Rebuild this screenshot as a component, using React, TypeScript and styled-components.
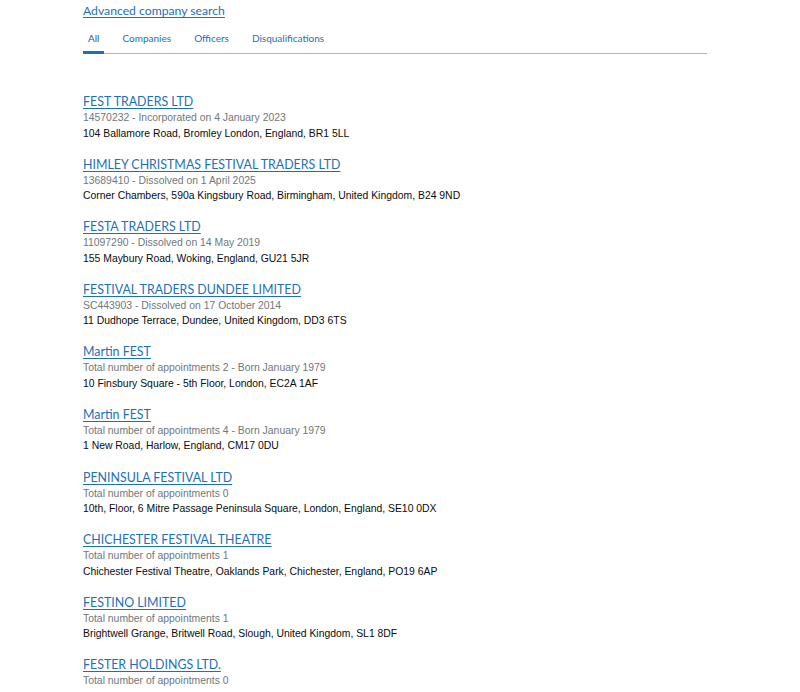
import React from "react";
import styled, { createGlobalStyle } from "styled-components";

const GlobalStyle = createGlobalStyle`
  html, body {
    margin: 0;
    padding: 0;
    background: #ffffff;
  }
  body {
    font-family: "Liberation Sans", Arial, sans-serif;
    color: #0b0c0c;
  }
`;

const Page = styled.div`
  padding: 2px 0 40px 83px;
`;

const Container = styled.div`
  width: 624px;
`;

const AdvancedLink = styled.a`
  display: block;
  width: fit-content;
  font-family: Lato, "Noto Sans", sans-serif;
  font-size: 12.2px;
  line-height: 18px;
  color: #1d70b8;
  text-decoration: underline;
  text-underline-offset: 2px;
`;

const TabList = styled.ul`
  display: flex;
  gap: 13px;
  list-style: none;
  margin: 10px 0 0;
  padding: 0;
  border-bottom: 1px solid #b1b4b6;
`;

const Tab = styled.li<{ $active?: boolean }>`
  margin-bottom: -1px;
  border-bottom: 3px solid ${p => (p.$active ? "#1d70b8" : "transparent")};
`;

const TabLink = styled.a<{ $active?: boolean }>`
  display: block;
  padding: 0 5px 5px;
  font-family: Lato, "Noto Sans", sans-serif;
  font-size: 10px;
  line-height: 16px;
  color: ${p => (p.$active ? "#2a5b8a" : "#1d70b8")};
  text-decoration: none;
`;

const Results = styled.ul`
  list-style: none;
  margin: 40px 0 0;
  padding: 0;
`;

const Result = styled.li`
  margin-bottom: 15.6px;
`;

const Title = styled.a`
  display: block;
  width: fit-content;
  font-family: Lato, "Noto Sans", sans-serif;
  font-size: 12.4px;
  line-height: 16px;
  color: #1d70b8;
  text-decoration: underline;
  text-underline-offset: 2px;
`;

const Meta = styled.p<{ $muted?: boolean }>`
  margin: 0;
  font-size: 10.4px;
  line-height: 15.5px;
  color: ${p => (p.$muted ? "#6f777b" : "#0b0c0c")};
`;

interface SearchResult {
  title: string;
  meta: string;
  address?: string;
}

const results: SearchResult[] = [
  {
    title: "FEST TRADERS LTD",
    meta: "14570232 - Incorporated on 4 January 2023",
    address: "104 Ballamore Road, Bromley London, England, BR1 5LL",
  },
  {
    title: "HIMLEY CHRISTMAS FESTIVAL TRADERS LTD",
    meta: "13689410 - Dissolved on 1 April 2025",
    address: "Corner Chambers, 590a Kingsbury Road, Birmingham, United Kingdom, B24 9ND",
  },
  {
    title: "FESTA TRADERS LTD",
    meta: "11097290 - Dissolved on 14 May 2019",
    address: "155 Maybury Road, Woking, England, GU21 5JR",
  },
  {
    title: "FESTIVAL TRADERS DUNDEE LIMITED",
    meta: "SC443903 - Dissolved on 17 October 2014",
    address: "11 Dudhope Terrace, Dundee, United Kingdom, DD3 6TS",
  },
  {
    title: "Martin FEST",
    meta: "Total number of appointments 2 - Born January 1979",
    address: "10 Finsbury Square - 5th Floor, London, EC2A 1AF",
  },
  {
    title: "Martin FEST",
    meta: "Total number of appointments 4 - Born January 1979",
    address: "1 New Road, Harlow, England, CM17 0DU",
  },
  {
    title: "PENINSULA FESTIVAL LTD",
    meta: "Total number of appointments 0",
    address: "10th, Floor, 6 Mitre Passage Peninsula Square, London, England, SE10 0DX",
  },
  {
    title: "CHICHESTER FESTIVAL THEATRE",
    meta: "Total number of appointments 1",
    address: "Chichester Festival Theatre, Oaklands Park, Chichester, England, PO19 6AP",
  },
  {
    title: "FESTINO LIMITED",
    meta: "Total number of appointments 1",
    address: "Brightwell Grange, Britwell Road, Slough, United Kingdom, SL1 8DF",
  },
  {
    title: "FESTER HOLDINGS LTD.",
    meta: "Total number of appointments 0",
    address: "Unit 4, Festival Park, Ebbw Vale, Wales, NP23 8FP",
  },
  {
    title: "FESTIVAL REPUBLIC LIMITED",
    meta: "Total number of appointments 0",
    address: "Live Nation House, 5 Kemble Street, London, WC2B 4AN",
  },
];

const tabs = ["All", "Companies", "Officers", "Disqualifications"];

export default function App() {
  return (
    <>
      <GlobalStyle />
      <Page>
        <Container>
          <AdvancedLink href="#">Advanced company search</AdvancedLink>
          <TabList>
            {tabs.map((tab, i) => (
              <Tab key={tab} $active={i === 0}>
                <TabLink href="#" $active={i === 0}>
                  {tab}
                </TabLink>
              </Tab>
            ))}
          </TabList>
          <Results>
            {results.map((r, i) => (
              <Result key={i}>
                <Title href="#">{r.title}</Title>
                <Meta $muted>{r.meta}</Meta>
                {r.address && <Meta>{r.address}</Meta>}
              </Result>
            ))}
          </Results>
        </Container>
      </Page>
    </>
  );
}
